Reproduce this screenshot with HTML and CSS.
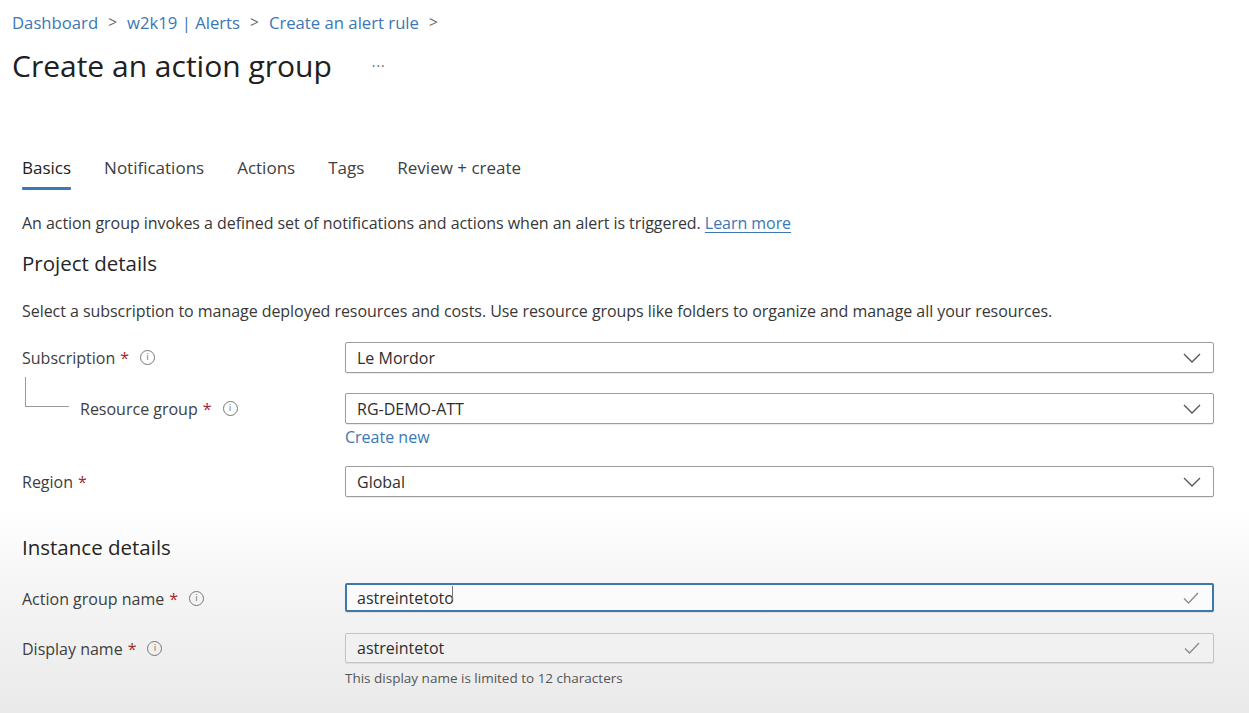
FILE: index.html
```html
<!DOCTYPE html>
<html lang="en">
<head>
<meta charset="utf-8">
<title>Create an action group</title>
<link rel="stylesheet" href="styles.css">
</head>
<body>
<div class="page">
  <nav class="breadcrumb">
    <a href="#">Dashboard</a><span class="sep">&gt;</span>
    <a href="#">w2k19 | Alerts</a><span class="sep">&gt;</span>
    <a href="#">Create an alert rule</a><span class="sep">&gt;</span>
  </nav>
  <div class="title-row">
    <h1>Create an action group</h1>
    <span class="more">···</span>
  </div>

  <div class="tabs">
    <span class="tab active">Basics</span>
    <span class="tab">Notifications</span>
    <span class="tab">Actions</span>
    <span class="tab">Tags</span>
    <span class="tab">Review + create</span>
  </div>

  <p class="intro">An action group invokes a defined set of notifications and actions when an alert is triggered. <a href="#">Learn more</a></p>

  <h2>Project details</h2>
  <p class="desc">Select a subscription to manage deployed resources and costs. Use resource groups like folders to organize and manage all your resources.</p>

  <div class="row r-sub">
    <div class="label">Subscription <span class="req">*</span><span class="info">i</span></div>
    <div class="field">
      <div class="input"><span>Le Mordor</span>
        <svg class="chev" width="18" height="10" viewBox="0 0 18 10"><path d="M1 1 L9 9 L17 1" fill="none" stroke="#555" stroke-width="1.3"/></svg>
      </div>
    </div>
  </div>

  <div class="row r-rg">
    <div class="label nested"><span class="tree"></span>Resource group <span class="req">*</span><span class="info">i</span></div>
    <div class="field">
      <div class="input"><span>RG-DEMO-ATT</span>
        <svg class="chev" width="18" height="10" viewBox="0 0 18 10"><path d="M1 1 L9 9 L17 1" fill="none" stroke="#555" stroke-width="1.3"/></svg>
      </div>
      <a class="create" href="#">Create new</a>
    </div>
  </div>

  <div class="row r-region">
    <div class="label">Region <span class="req">*</span></div>
    <div class="field">
      <div class="input"><span>Global</span>
        <svg class="chev" width="18" height="10" viewBox="0 0 18 10"><path d="M1 1 L9 9 L17 1" fill="none" stroke="#555" stroke-width="1.3"/></svg>
      </div>
    </div>
  </div>

  <h2 class="inst">Instance details</h2>

  <div class="row r-agn">
    <div class="label">Action group name <span class="req">*</span><span class="info">i</span></div>
    <div class="field">
      <div class="input focused"><span>astreintetoto<span class="caret"></span></span>
        <svg class="check" width="16" height="12" viewBox="0 0 16 12"><path d="M1 6.5 L5.5 11 L15 1" fill="none" stroke="#8a8a8a" stroke-width="1.3"/></svg>
      </div>
    </div>
  </div>

  <div class="row r-dn">
    <div class="label">Display name <span class="req">*</span><span class="info">i</span></div>
    <div class="field">
      <div class="input gray"><span>astreintetot</span>
        <svg class="check" width="16" height="12" viewBox="0 0 16 12"><path d="M1 6.5 L5.5 11 L15 1" fill="none" stroke="#8a8a8a" stroke-width="1.3"/></svg>
      </div>
      <div class="hint">This display name is limited to 12 characters</div>
    </div>
  </div>
</div>
</body>
</html>
```

FILE: styles.css
```css
* { box-sizing: border-box; }
html, body { margin: 0; height: 100%; }
body {
  font-family: "Open Sans", "Noto Sans", sans-serif;
  color: #323130;
  background: linear-gradient(to bottom, #ffffff 0px, #ffffff 510px, #f4f4f4 600px, #eaeaea 713px);
  overflow: hidden;
}
a { color: #3c76b4; text-decoration: none; }

.page { padding: 8px 35px 0 22px; }

.breadcrumb {
  font-size: 16.7px;
  margin-left: -10px;
  height: 28px;
  display: flex;
  align-items: center;
}
.breadcrumb .sep { color: #6b6b6b; margin: 0 10px; font-size: 15.5px; }

.title-row { display: flex; align-items: center; margin-left: -10px; margin-top: 9px; height: 40px; }
h1 { margin: 0; font-size: 30px; font-weight: 400; color: #202020; }
.more { margin-left: 40px; color: #666; font-size: 14px; letter-spacing: 1px; }

.tabs { display: flex; gap: 33px; margin-top: 71px; font-size: 17px; }
.tab { color: #404040; padding-bottom: 8px; position: relative; }
.tab.active { color: #202020; }
.tab.active::after {
  content: ""; position: absolute; left: 0; right: 0; bottom: -3px; height: 3px; background: #3a78b8; border-radius: 1px;
}

.intro { margin: 25px 0 0; font-size: 16px; color: #383838; letter-spacing: -0.05px; }
.intro a { text-decoration: underline; text-underline-offset: 3px; }

h2 { margin: 15px 0 0; font-size: 20.5px; font-weight: 500; color: #252525; }
.desc { margin: 23px 0 0; font-size: 16px; color: #383838; letter-spacing: -0.05px; }

.row { display: flex; align-items: flex-start; }
.label {
  width: 323px; flex: none; font-size: 16px; color: #3e3e3e; height: 31px;
  display: flex; align-items: center;
}
.label .req { color: #a4262c; margin-left: 5px; }
.info {
  display: inline-flex; align-items: center; justify-content: center;
  width: 15px; height: 15px; border: 1px solid #777; border-radius: 50%;
  font-size: 9px; color: #777; margin-left: 11px; line-height: 1;
  font-family: "DejaVu Sans", sans-serif;
}
.label.nested { padding-left: 58px; position: relative; }
.tree {
  position: absolute; left: 3px; top: -16px; width: 44px; height: 30px;
  border-left: 1px solid #9a9a9a; border-bottom: 1px solid #9a9a9a;
}
.field { flex: 1; }
.input {
  height: 31px; border: 1px solid #9c9c9c; border-radius: 2px; background: #fff;
  display: flex; align-items: center; justify-content: space-between;
  padding: 0 11px 0 11px; font-size: 16px; color: #2e2e2e;
  box-shadow: 0 1px 1px rgba(0,0,0,0.08);
}
.input.focused { border: 2px solid #3d78ad; padding-left: 10px; background: #fbfbfb; height: 29px; }
.input.gray { background: #f1f1f1; border-color: #c4c4c4; height: 30px; }
.chev { margin-right: 1px; }
.check { margin-right: 2px; }
.caret { display: inline-block; width: 1px; height: 14px; background: #777; vertical-align: -1px; margin-left: -2px; position: relative; top: -5px; }

.r-sub { margin-top: 20px; }
.r-rg { margin-top: 20px; }
.create { display: block; font-size: 16px; margin-top: 2px; }
.r-region { margin-top: 18px; }
.inst { margin-top: 36px; }
.r-agn { margin-top: 22px; }
.r-dn { margin-top: 19px; }
.hint { font-size: 13.5px; color: #555; margin-top: 6px; }
```
